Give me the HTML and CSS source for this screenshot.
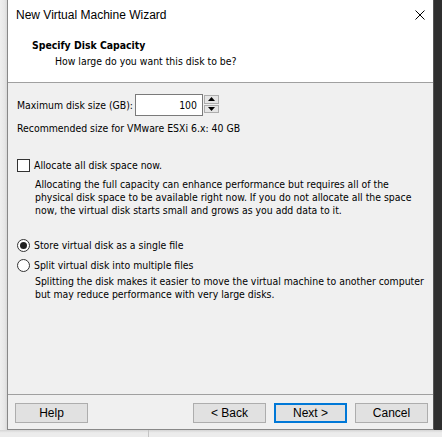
FILE: index.html
```html
<!DOCTYPE html>
<html>
<head>
<meta charset="utf-8">
<link rel="stylesheet" href="styles.css">
</head>
<body>
<div class="screen">
  <div class="left-strip"></div>
  <div class="window">
    <div class="titlebar">
      <span class="title">New Virtual Machine Wizard</span>
      <svg class="close" width="10" height="10" viewBox="0 0 10 10"><path d="M0.5 0.5 L9.5 9.5 M9.5 0.5 L0.5 9.5" stroke="#000" stroke-width="1" fill="none"/></svg>
    </div>
    <div class="header">
      <div class="h-title">Specify Disk Capacity</div>
      <div class="h-sub">How large do you want this disk to be?</div>
    </div>
    <div class="body">
      <div class="size-row">
        <span class="lbl">Maximum disk size (GB):</span>
        <div class="spin">
          <div class="spin-input">100</div>
          <div class="spin-btns">
            <div class="spin-btn"><svg width="7" height="4" viewBox="0 0 7 4"><path d="M3.5 0 L7 4 L0 4 Z" fill="#000"/></svg></div>
            <div class="spin-btn"><svg width="7" height="4" viewBox="0 0 7 4"><path d="M0 0 L7 0 L3.5 4 Z" fill="#000"/></svg></div>
          </div>
        </div>
      </div>
      <div class="rec">Recommended size for VMware ESXi 6.x: 40 GB</div>
      <div class="opt check-row">
        <span class="checkbox"></span>
        <span class="opt-lbl">Allocate all disk space now.</span>
      </div>
      <div class="desc desc1">Allocating the full capacity can enhance performance but requires all of the<br>physical disk space to be available right now. If you do not allocate all the space<br>now, the virtual disk starts small and grows as you add data to it.</div>
      <div class="opt radio-row1">
        <span class="radio checked"></span>
        <span class="opt-lbl">Store virtual disk as a single file</span>
      </div>
      <div class="opt radio-row2">
        <span class="radio"></span>
        <span class="opt-lbl">Split virtual disk into multiple files</span>
      </div>
      <div class="desc desc2">Splitting the disk makes it easier to move the virtual machine to another computer<br>but may reduce performance with very large disks.</div>
    </div>
    <div class="footer">
      <button class="btn">Help</button>
      <div class="spacer"></div>
      <button class="btn">&lt; Back</button>
      <button class="btn primary">Next &gt;</button>
      <button class="btn">Cancel</button>
    </div>
  </div>
  <div class="right-strip"></div>
</div>
<div class="below"><div class="below-line"></div></div>
</body>
</html>
```

FILE: styles.css
```css
* { box-sizing: border-box; }
html, body { margin: 0; padding: 0; }
body {
  width: 442px;
  height: 437px;
  overflow: hidden;
  background: #ececec;
  font-family: "DejaVu Sans Condensed", "DejaVu Sans", sans-serif;
  font-size: 10.4px;
  color: #000;
}
.screen {
  display: flex;
  height: 430px;
}
.left-strip {
  width: 7px;
  background: linear-gradient(to right, #efefef, #e6e6e6 70%, #d8d8d8);
}
.right-strip {
  width: 8px;
  background: #2f2f2f;
}
.window {
  width: 427px;
  display: flex;
  flex-direction: column;
  border-left: 1px solid #888;
  border-right: 1px solid #555;
  border-bottom: 1px solid #888;
  background: #f0f0f0;
}
.titlebar {
  height: 31px;
  background: #fff;
  display: flex;
  align-items: center;
  padding-left: 8px;
  padding-right: 8px;
}
.title {
  font-family: "Liberation Sans", Arial, sans-serif;
  font-size: 12px;
  flex: 1;
  padding-bottom: 1px;
}
.close { display: block; margin-bottom: 1px; }
.header {
  height: 51px;
  background: #fff;
  padding-top: 6px;
}
.h-title {
  font-weight: bold;
  line-height: 16px;
  padding-left: 24px;
}
.h-sub {
  line-height: 16px;
  padding-left: 47px;
}
.body {
  flex: 1;
  border-top: 1px solid #a0a0a0;
  padding-left: 9px;
  white-space: nowrap;
}
.size-row {
  margin-top: 11px;
  display: flex;
  align-items: center;
  height: 22px;
}
.lbl { width: 118px; }
.spin { display: flex; height: 22px; }
.spin-input {
  width: 68px;
  height: 22px;
  background: #fff;
  border: 1px solid #7a7a7a;
  text-align: right;
  padding-right: 5px;
  line-height: 20px;
}
.spin-btns {
  width: 16px;
  height: 22px;
  display: flex;
  flex-direction: column;
  justify-content: center;
  padding: 1px 0 2px 1px;
}
.spin-btn {
  height: 9px;
  margin-bottom: 1px;
  border: 1px solid #adadad;
  background: #e5e5e5;
  display: flex;
  align-items: center;
  justify-content: center;
}
.rec {
  margin-top: 6px;
  line-height: 13px;
}
.opt {
  display: flex;
  align-items: center;
  height: 15px;
}
.check-row { margin-top: 23px; }
.checkbox {
  width: 13px;
  height: 13px;
  border: 1px solid #333;
  background: #fff;
  margin-right: 4px;
}
.opt-lbl { line-height: 15px; }
.desc {
  padding-left: 18px;
  line-height: 13px;
}
.desc1 { margin-top: 5px; }
.radio-row1 { margin-top: 21px; }
.radio-row2 { margin-top: 5px; }
.desc2 { margin-top: 2px; }
.radio {
  width: 13px;
  height: 13px;
  border: 1px solid #333;
  border-radius: 50%;
  background: #fff;
  margin-right: 4px;
  display: flex;
  align-items: center;
  justify-content: center;
}
.radio.checked::after {
  content: "";
  width: 7px;
  height: 7px;
  border-radius: 50%;
  background: #222;
}
.footer {
  height: 35px;
  border-top: 1px solid #a0a0a0;
  display: flex;
  align-items: flex-start;
  padding-top: 8px;
  padding-left: 7px;
  padding-right: 5px;
}
.spacer { flex: 1; }
.btn {
  width: 73px;
  height: 20px;
  margin: 0 0 0 8px;
  padding: 0;
  background: #e1e1e1;
  border: 1px solid #adadad;
  font-family: "Liberation Sans", Arial, sans-serif;
  font-size: 12px;
  color: #000;
  line-height: 18px;
}
.btn:first-child { margin-left: 0; }
.btn.primary {
  border: 2px solid #0078d7;
  line-height: 16px;
}
.below {
  height: 7px;
  background: linear-gradient(to bottom, #d4d4d4, #ececec 40%);
  position: relative;
}
.below-line {
  position: absolute;
  left: 148px;
  top: 0;
  width: 1px;
  height: 7px;
  background: #c4c4c4;
}
```
